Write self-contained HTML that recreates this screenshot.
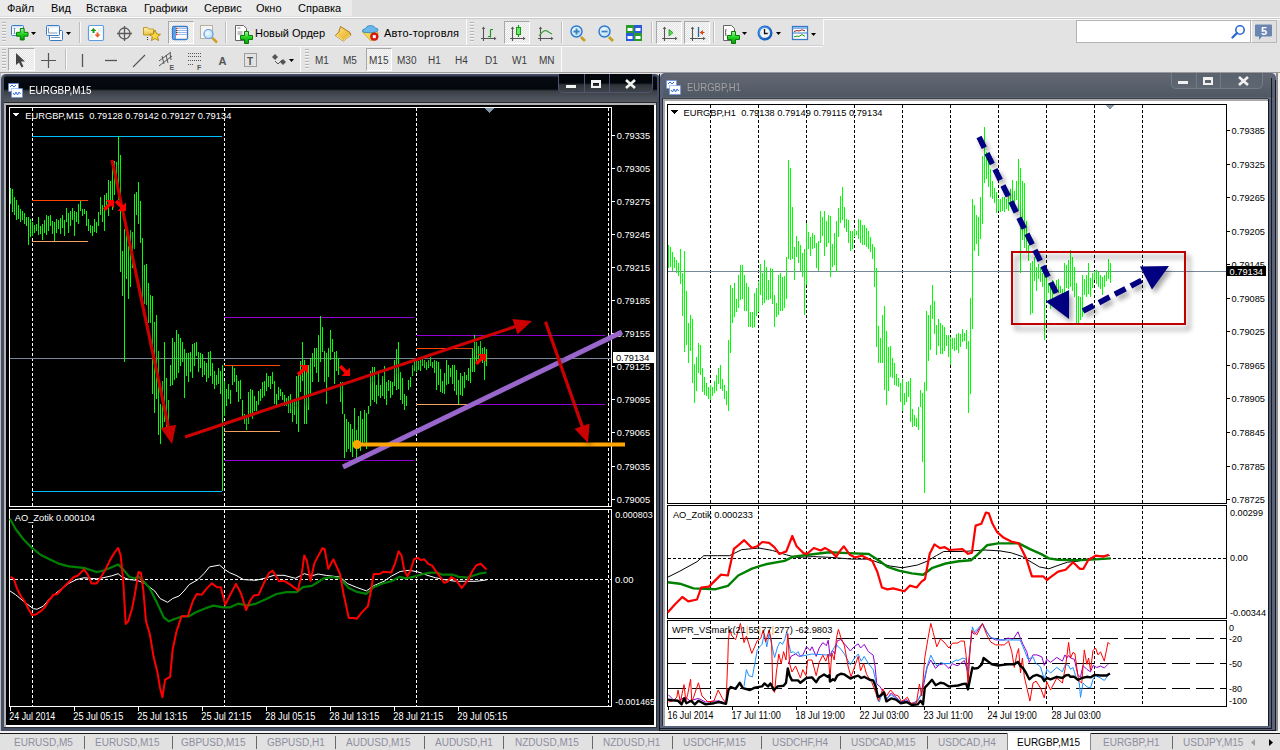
<!DOCTYPE html><html><head><meta charset="utf-8"><style>
*{margin:0;padding:0;box-sizing:border-box}
html,body{width:1280px;height:750px;overflow:hidden;background:#e2e2e2;font-family:"Liberation Sans",sans-serif;position:relative}
.a{position:absolute}
.mt{position:absolute;top:1px;font-size:11px;color:#000;line-height:14px;white-space:pre}
.tbt{position:absolute;font-size:11px;color:#000;line-height:14px;white-space:pre}
.tf{position:absolute;top:54px;font-size:10px;color:#3c3c3c;line-height:13px;white-space:pre}
.sep{position:absolute;width:2px;border-left:1px solid #bdbdbd;border-right:1px solid #fafafa}
.grip{position:absolute;width:4px;background:repeating-linear-gradient(#b5b5b5 0 1px,#f4f4f4 1px 2px,transparent 2px 3px)}
.pr{position:absolute;border-top:1px solid #a8a8a8;border-left:1px solid #a8a8a8;border-right:1px solid #fff;border-bottom:1px solid #fff;background:repeating-conic-gradient(#e4e4e4 0 25%,#f8f8f8 0 50%) 0 0/2px 2px}
.tab{position:absolute;top:2px;font-size:10px;color:#8e8ea0;line-height:13px;white-space:pre}
.ts{position:absolute;top:736px;width:1px;height:13px;background:#6a6a6a}
svg text{font-family:"Liberation Sans",sans-serif}
</style></head><body><div class="a" style="left:0;top:0;width:1280px;height:17px;background:#dfdfdf"></div><div class="a" style="left:0;top:0;width:352px;height:16px;background:#ebebeb"></div><span class="mt" style="left:7px">Файл</span><span class="mt" style="left:51px">Вид</span><span class="mt" style="left:86px">Вставка</span><span class="mt" style="left:144px">Графики</span><span class="mt" style="left:204px">Сервис</span><span class="mt" style="left:256px">Окно</span><span class="mt" style="left:298px">Справка</span><div class="a" style="left:0;top:17px;width:1280px;height:1px;background:#fdfdfd"></div><div class="a" style="left:0;top:18px;width:1280px;height:1px;background:#c9c9c9"></div><div class="a" style="left:0;top:19px;width:1280px;height:26px;background:#e3e3e3"></div><div class="a" style="left:0;top:19px;width:1280px;height:1px;background:#fafafa"></div><div class="a" style="left:0;top:45px;width:823px;height:1px;background:#cfcfcf"></div><div class="a" style="left:0;top:46px;width:823px;height:1px;background:#fbfbfb"></div><div class="a" style="left:0;top:47px;width:1280px;height:25px;background:#e3e3e3"></div><div class="a" style="left:0;top:72px;width:1280px;height:1px;background:#9a9a9a"></div><div class="a" style="left:0px;top:19px;width:467px;height:26px;border-right:1px solid #fbfbfb;background:#e3e3e3"></div><div class="a" style="left:467px;top:19px;width:357px;height:26px;border-right:1px solid #fbfbfb;background:#e3e3e3"></div><div class="a" style="left:0px;top:47px;width:301px;height:25px;border-right:1px solid #fbfbfb;background:#e3e3e3"></div><div class="a" style="left:301px;top:47px;width:261px;height:25px;border-right:1px solid #fbfbfb;background:#e3e3e3"></div><div class="grip" style="left:2px;top:22px;height:20px"></div><div class="grip" style="left:470px;top:22px;height:20px"></div><div class="grip" style="left:2px;top:49px;height:20px"></div><div class="grip" style="left:305px;top:49px;height:20px"></div><div class="sep" style="left:79px;top:22px;height:21px"></div><div class="sep" style="left:225px;top:22px;height:21px"></div><div class="sep" style="left:561px;top:22px;height:21px"></div><div class="sep" style="left:651px;top:22px;height:21px"></div><div class="sep" style="left:713px;top:22px;height:21px"></div><div class="sep" style="left:65px;top:49px;height:21px"></div><div class="pr" style="left:168px;top:21px;width:26px;height:23px"></div><div class="pr" style="left:504px;top:21px;width:26px;height:23px"></div><div class="pr" style="left:656px;top:21px;width:26px;height:23px"></div><div class="pr" style="left:684px;top:21px;width:26px;height:23px"></div><div class="pr" style="left:8px;top:48px;width:27px;height:23px"></div><div class="pr" style="left:366px;top:48px;width:26px;height:23px"></div><span class="tbt" style="left:255px;top:26px">Новый Ордер</span><span class="tbt" style="left:384px;top:26px;letter-spacing:0.2px">Авто-торговля</span><span class="tf" style="left:315px">M1</span><span class="tf" style="left:343px">M5</span><span class="tf" style="left:369px">M15</span><span class="tf" style="left:397px">M30</span><span class="tf" style="left:428px">H1</span><span class="tf" style="left:455px">H4</span><span class="tf" style="left:485px">D1</span><span class="tf" style="left:512px">W1</span><span class="tf" style="left:539px">MN</span><div class="a" style="left:1076px;top:20px;width:175px;height:23px;background:#fff;border:1px solid #b4b4b4"></div><div class="a" style="left:1251px;top:20px;width:26px;height:23px;background:#e0e0e0;border:1px solid #b8b8b8;border-left:1px solid #fff"></div><svg class="a" style="left:1230px;top:24px" width="16" height="16" viewBox="0 0 16 16"><circle cx="10" cy="6" r="4.2" fill="none" stroke="#2a6ad0" stroke-width="1.6"/><path d="M7 9 L2.5 13.5" stroke="#2a6ad0" stroke-width="2.4" stroke-linecap="round"/></svg><svg class="a" style="left:1255px;top:24px" width="18" height="17" viewBox="0 0 18 17"><path d="M1 0.5 h15 a1 1 0 0 1 1 1 v10 a1 1 0 0 1 -1 1 h-9 l-3 3.5 v-3.5 h-3 a1 1 0 0 1 -1 -1 v-10 a1 1 0 0 1 1 -1z" fill="#6a86b0"/><text x="9" y="10.5" font-size="11" font-weight="bold" fill="#fff" text-anchor="middle" font-family="Liberation Sans">5</text></svg><svg class="a" style="left:0;top:0" width="830" height="73" viewBox="0 0 830 73"><defs><linearGradient id="gplus" x1="0" y1="0" x2="0" y2="1"><stop offset="0" stop-color="#9dff9d"/><stop offset="0.5" stop-color="#1fd21f"/><stop offset="1" stop-color="#0a9a0a"/></linearGradient><linearGradient id="gwin" x1="0" y1="0" x2="0" y2="1"><stop offset="0" stop-color="#bcd8f4"/><stop offset="0.3" stop-color="#fff"/><stop offset="1" stop-color="#fff"/></linearGradient><linearGradient id="gfold" x1="0" y1="0" x2="0" y2="1"><stop offset="0" stop-color="#fff6b0"/><stop offset="1" stop-color="#e8c040"/></linearGradient><radialGradient id="glens" cx="0.4" cy="0.4" r="0.6"><stop offset="0" stop-color="#f4fbff"/><stop offset="1" stop-color="#b9dcf4"/></radialGradient><linearGradient id="gbook" x1="0" y1="0" x2="1" y2="1"><stop offset="0" stop-color="#ffe680"/><stop offset="1" stop-color="#e0a820"/></linearGradient><linearGradient id="gclock" x1="0" y1="0" x2="1" y2="1"><stop offset="0" stop-color="#5aa8f8"/><stop offset="1" stop-color="#0848a8"/></linearGradient></defs><rect x="11.5" y="25.5" width="12" height="10" rx="1" fill="url(#gwin)" stroke="#3a7bc8"/><path d="M14.5 28 v6 M13.5 29 l1 -1 l1 1 M13.5 33 l1 1 l1 -1" stroke="#7a9ab8" fill="none"/><path d="M20.333333333333332 28.5 h3.8333333333333335 v3.8333333333333335 h3.8333333333333335 v3.8333333333333335 h-3.8333333333333335 v3.8333333333333335 h-3.8333333333333335 v-3.8333333333333335 h-3.8333333333333335 v-3.8333333333333335 h3.8333333333333335 z" fill="url(#gplus)" stroke="#0a7a0a" stroke-width="1"/><polygon points="31,32 36,32 33.5,35" fill="#000"/><rect x="49.5" y="30.5" width="13" height="10" rx="1" fill="#fff" stroke="#3a7bc8"/><rect x="46.5" y="25.5" width="13" height="10" rx="1" fill="url(#gwin)" stroke="#3a7bc8"/><path d="M48.5 28 v5 h9 M51 37.5 h9" stroke="#7a9ab8" fill="none"/><polygon points="66,32 71,32 68.5,35" fill="#000"/><rect x="88.5" y="25.5" width="15" height="15" rx="1.5" fill="#fff" stroke="#5a9ee8" stroke-width="1.2"/><path d="M93.5 28 l-3 3 h2 v2 h2 v-2 h2 z" fill="#1a9a1a"/><path d="M97.5 37.5 l3 -3 h-2 v-2 h-2 v2 h-2 z" fill="#e85a2a"/><path d="M98 29 h4 M98 31 h4 M90 35 h3 M90 37 h3" stroke="#ddd" stroke-width="0.8"/><circle cx="124.5" cy="33.5" r="5.5" fill="none" stroke="#5a5a5a" stroke-width="1.3"/><path d="M124.5 26 v15 M117 33.5 h15" stroke="#5a5a5a" stroke-width="1.3"/><path d="M143.5 27.5 h4 l1 1.5 h5 v6 h-10 z" fill="url(#gfold)" stroke="#c09a20"/><polygon points="155,30 156.7,34 160.5,34.3 157.6,36.8 158.6,40.6 155,38.5 151.4,40.6 152.4,36.8 149.5,34.3 153.3,34" fill="#f8d840" stroke="#b08010" stroke-width="0.9"/><path d="M147.5 37 v4" stroke="#333" stroke-dasharray="1,1"/><rect x="172.5" y="26.5" width="15" height="13" rx="1.5" fill="#fff" stroke="#3a7bc8" stroke-width="1.3"/><rect x="173" y="27" width="3" height="12" fill="#5a9ee8"/><path d="M178 28.5 h9 M178 30.5 h9 M178 32.5 h9 M178 34.5 h9" stroke="#8fb2e6" stroke-width="0.9"/><circle cx="176.8" cy="28.5" r="0.8" fill="#e00"/><circle cx="176.8" cy="30.5" r="0.8" fill="#222"/><circle cx="176.8" cy="32.5" r="0.8" fill="#222"/><circle cx="176.8" cy="34.5" r="0.8" fill="#e00"/><rect x="200.5" y="25.5" width="12" height="13" fill="#f4f4f4" stroke="#b8b0a0"/><path d="M212.5 38 l4.5 4.5" stroke="#d0a020" stroke-width="2.5"/><circle cx="208.5" cy="34" r="4.5" fill="url(#glens)" stroke="#5a9ee8" stroke-width="1.2"/><path d="M235.5 25.5 h8 l3 3 v12 h-11 z" fill="#fff" stroke="#666"/><path d="M237.5 28 h3 M237.5 32 h5 M237.5 34 h5" stroke="#888"/><path d="M244.5 31.5 h4.0 v4.0 h4.0 v4.0 h-4.0 v4.0 h-4.0 v-4.0 h-4.0 v-4.0 h4.0 z" fill="url(#gplus)" stroke="#0a7a0a" stroke-width="1"/><path d="M340.5 26.5 l9.5 6 l0.8 2.5 l-7.5 6 l-8 -5.5 l3.5 -3.5 z" fill="url(#gbook)" stroke="#a06a10" stroke-width="0.9"/><path d="M336 35.5 l7.5 5 l6.5 -5.5" fill="none" stroke="#fff0a0" stroke-width="0.9"/><path d="M362.5 32 l8.5 9 l6.5 -3 l0.5 -6 z" fill="#f4dc50" stroke="#d0a020" stroke-width="0.8"/><path d="M362.5 31.5 q-1 -2 3 -3 q1 -3 5 -3 q4 0 4.5 2.5 q3.5 0 3 2.5 q-1 2 -7.5 2.3 q-7 0 -8 -1.3z" fill="#6ab8ea" stroke="#2a88c0" stroke-width="0.8"/><circle cx="374.3" cy="36.6" r="3.9" fill="#e01a10" stroke="#b01010" stroke-width="0.6"/><rect x="372.8" y="35.1" width="3" height="3" fill="#fff"/><path d="M483.5 28 v13 M481 38.5 h14" stroke="#555" stroke-width="1.1" fill="none"/><polygon points="483.5,26.5 481.8,29 485.2,29" fill="#555"/><polygon points="496.5,38.5 494,36.8 494,40.2" fill="#555"/><path d="M490.5 29.5 v8 M490.5 29.5 h2.5 M488 36.5 h2.5" stroke="#1a9a1a" stroke-width="1.2" fill="none"/><path d="M512.5 28 v13 M510 38.5 h14" stroke="#555" stroke-width="1.1" fill="none"/><polygon points="512.5,26.5 510.8,29 514.2,29" fill="#555"/><polygon points="525.5,38.5 523,36.8 523,40.2" fill="#555"/><path d="M518.5 25 v12" stroke="#1a9a1a" stroke-width="1.2"/><rect x="516.5" y="27.5" width="4" height="7" fill="#6ae86a" stroke="#1a9a1a"/><path d="M540.5 28 v13 M538 38.5 h14" stroke="#555" stroke-width="1.1" fill="none"/><polygon points="540.5,26.5 538.8,29 542.2,29" fill="#555"/><polygon points="553.5,38.5 551,36.8 551,40.2" fill="#555"/><path d="M539 36 q5 -7 8 -5 t5 3" stroke="#3aa03a" stroke-width="1.2" fill="none"/><path d="M581 37 l4 4" stroke="#c8a020" stroke-width="2.8"/><circle cx="576.5" cy="31.5" r="5.5" fill="url(#glens)" stroke="#2a78d0" stroke-width="1.4"/><path d="M573.5 31.5 h6 M576.5 28.5 v6" stroke="#3a80b8" stroke-width="1.8"/><path d="M609 37 l4 4" stroke="#c8a020" stroke-width="2.8"/><circle cx="604.5" cy="31.5" r="5.5" fill="url(#glens)" stroke="#2a78d0" stroke-width="1.4"/><path d="M601.5 31.5 h6" stroke="#3a80b8" stroke-width="1.8"/><rect x="626" y="25" width="8" height="8" fill="#2a9a2a"/><rect x="627.5" y="28" width="5" height="3" fill="#fff"/><rect x="634" y="25" width="8" height="8" fill="#2a5ad8"/><rect x="635.5" y="28" width="5" height="3" fill="#fff"/><rect x="626" y="33" width="8" height="8" fill="#2a5ad8"/><rect x="627.5" y="36" width="5" height="3" fill="#fff"/><rect x="634" y="33" width="8" height="8" fill="#2a9a2a"/><rect x="635.5" y="36" width="5" height="3" fill="#fff"/><path d="M664.5 28 v13 M662 38.5 h14" stroke="#555" stroke-width="1.1" fill="none"/><polygon points="664.5,26.5 662.8,29 666.2,29" fill="#555"/><polygon points="677.5,38.5 675,36.8 675,40.2" fill="#555"/><polygon points="669,29.5 669,36 673,32.7" fill="#5ad85a" stroke="#1a9a1a" stroke-width="0.8"/><path d="M692.5 28 v13 M690 38.5 h14" stroke="#555" stroke-width="1.1" fill="none"/><polygon points="692.5,26.5 690.8,29 694.2,29" fill="#555"/><polygon points="705.5,38.5 703,36.8 703,40.2" fill="#555"/><path d="M698.5 27 v10" stroke="#1a6aa0" stroke-width="1.3"/><polygon points="699.5,32.5 703,30 703,35" fill="#d84a10"/><path d="M702 32.5 h2.5" stroke="#d84a10"/><path d="M723.5 25.5 h8 l3 3 v12 h-11 z" fill="#fff" stroke="#666"/><path d="M726 29 q-1 3 0 7" stroke="#555" fill="none"/><path d="M731.5 31.5 h4.0 v4.0 h4.0 v4.0 h-4.0 v4.0 h-4.0 v-4.0 h-4.0 v-4.0 h4.0 z" fill="url(#gplus)" stroke="#0a7a0a" stroke-width="1"/><polygon points="742,32 747,32 744.5,35" fill="#000"/><circle cx="765" cy="33" r="7.5" fill="#1060c8"/><circle cx="765" cy="33" r="6.8" fill="url(#gclock)"/><circle cx="765" cy="33" r="5" fill="#f4f6f8"/><path d="M764.5 29 v4.5 h3.2" stroke="#111" stroke-width="1.3" fill="none"/><path d="M765 28.6 v0.8 M765 36.6 v0.8 M761 33 h0.8 M768.4 33 h0.8" stroke="#999" stroke-width="0.7"/><polygon points="776,32 781,32 778.5,35" fill="#000"/><rect x="792.5" y="26.5" width="15" height="13" fill="#fff" stroke="#3a7bc8" stroke-width="1.3"/><rect x="793" y="27" width="14" height="2" fill="#8ab8ec"/><path d="M793 33 h14" stroke="#3a7bc8"/><path d="M794 31.5 l3 -1 l2 0.5 l3 -1.2 l3 1" stroke="#a02010" fill="none"/><path d="M794 37 l3 -1 l2 0.5 l3 -2 l3 2" stroke="#1a9a1a" fill="none"/><polygon points="811,33 816,33 813.5,36" fill="#000"/><polygon points="16,53 16,65 19,62.5 21.5,67.5 23.5,66.5 21,61.5 25,61.5" fill="#444"/><path d="M48.5 53 v15 M41 60.5 h15" stroke="#555" stroke-width="1.2"/><path d="M82.5 54 v13" stroke="#555" stroke-width="1.3"/><path d="M105 60.5 h12" stroke="#555" stroke-width="1.3"/><path d="M133 67 l12 -12" stroke="#555" stroke-width="1.1"/><path d="M159 61 l12 -9 M159 66 l13 -10 M162 56 l2 8 M166 55 l2 8 M170 53 l1 7" stroke="#555" stroke-width="1" fill="none"/><text x="169.5" y="69.5" font-size="7" font-weight="bold" fill="#555">E</text><path d="M188 53.5 h13 M188 56.5 h13 M188 60.5 h13 M188 64.5 h6" stroke="#555" stroke-dasharray="1,1" fill="none"/><text x="197" y="69.5" font-size="7" font-weight="bold" fill="#555">F</text><text x="218.5" y="65" font-size="11" font-weight="bold" fill="#555">A</text><rect x="244.5" y="53.5" width="12" height="13" fill="none" stroke="#555" stroke-dasharray="1,1"/><text x="247" y="64.5" font-size="10" font-weight="bold" fill="#555">T</text><polygon points="275,54 278,57 275,60 272,57" fill="#555"/><polygon points="283,59 286,62 283,65 280,62" fill="#555"/><path d="M275 61 l3 3 l4 -4" stroke="#555" stroke-width="1" fill="none"/><polygon points="289,59 294,59 291.5,62" fill="#000"/></svg><div class="a" style="left:0;top:73px;width:1px;height:658px;background:#bdbdbd"></div><div class="a" style="left:1px;top:74px;width:659px;height:657px;background:#464f64;border-radius:5px 5px 0 0"></div><div class="a" style="left:4px;top:75px;width:653px;height:28px;border-radius:4px 4px 0 0;background:linear-gradient(#39415a 0px,#39415a 1px,#080b12 2px,#03060b 14px,#3a3e45 16px,#4a4e56 22px,#555960 27px,#8a8c90 28px)"></div><div class="a" style="left:660px;top:73px;width:616px;height:658px;background:#58627a;border-radius:5px 5px 0 0"></div><div class="a" style="left:663px;top:74px;width:610px;height:25px;border-radius:4px 4px 0 0;background:linear-gradient(#616872 0px,#5c636e 8px,#525a66 20px,#4f5763 23px,#6a717c 24px)"></div><div class="a" style="left:659px;top:74px;width:1px;height:657px;background:#111"></div><div class="a" style="left:1276px;top:73px;width:2px;height:658px;background:#8a8a8a"></div><div class="a" style="left:1278px;top:73px;width:2px;height:658px;background:#f2f2f2"></div><div class="a" style="left:1275px;top:80px;width:1px;height:651px;background:#15181e"></div><div class="a" style="left:1271px;top:78px;width:1px;height:651px;background:#15181e"></div><div class="a" style="left:1268px;top:99px;width:1px;height:627px;background:#15181e"></div><div class="a" style="left:662px;top:725px;width:607px;height:1px;background:#15181e"></div><div class="a" style="left:660px;top:728px;width:612px;height:1px;background:#15181e"></div><div class="a" style="left:660px;top:730px;width:616px;height:1px;background:#15181e"></div><div class="a" style="left:0;top:731px;width:1280px;height:2px;background:#f4f4f4"></div><div class="a" style="left:4px;top:102px;width:653px;height:1px;background:#25282e"></div><div class="a" style="left:4px;top:103px;width:653px;height:624px;background:#fff;border-top:2px solid #b4b4b4;border-left:2px solid #b4b4b4"></div><div class="a" style="left:656px;top:102px;width:1px;height:626px;background:#2a2e36"></div><div class="a" style="left:4px;top:727px;width:653px;height:1px;background:#2a2e36"></div><svg class="a" style="left:6px;top:105px" width="648" height="620" viewBox="6 105 648 620" shape-rendering="crispEdges"><defs><filter id="blur" x="-20%" y="-20%" width="140%" height="140%"><feGaussianBlur stdDeviation="2.5"/></filter></defs><rect x="6" y="105" width="648" height="620" fill="#000"/><line x1="32.5" y1="108" x2="32.5" y2="506" stroke="#fff" stroke-width="1" stroke-dasharray="3,2"/><line x1="32.5" y1="510" x2="32.5" y2="706" stroke="#fff" stroke-width="1" stroke-dasharray="3,2"/><line x1="224.5" y1="108" x2="224.5" y2="506" stroke="#fff" stroke-width="1" stroke-dasharray="3,2"/><line x1="224.5" y1="510" x2="224.5" y2="706" stroke="#fff" stroke-width="1" stroke-dasharray="3,2"/><line x1="416.5" y1="108" x2="416.5" y2="506" stroke="#fff" stroke-width="1" stroke-dasharray="3,2"/><line x1="416.5" y1="510" x2="416.5" y2="706" stroke="#fff" stroke-width="1" stroke-dasharray="3,2"/><line x1="608.5" y1="108" x2="608.5" y2="506" stroke="#fff" stroke-width="1" stroke-dasharray="3,2"/><line x1="608.5" y1="510" x2="608.5" y2="706" stroke="#fff" stroke-width="1" stroke-dasharray="3,2"/><line x1="10" y1="579.5" x2="611" y2="579.5" stroke="#fff" stroke-width="1" stroke-dasharray="3,2"/><line x1="10" y1="358.5" x2="611" y2="358.5" stroke="#778899" stroke-width="1"/><rect x="32" y="136" width="190" height="1" fill="#00bfff"/><rect x="32" y="491" width="190" height="1" fill="#00bfff"/><rect x="32" y="200" width="56" height="1" fill="#ff4500"/><rect x="32" y="241" width="56" height="1" fill="#f4a460"/><rect x="224" y="317" width="190" height="1" fill="#9400d3"/><rect x="224" y="460" width="190" height="1" fill="#9400d3"/><rect x="416" y="335" width="189" height="1" fill="#9400d3"/><rect x="416" y="404" width="189" height="1" fill="#9400d3"/><rect x="224" y="365" width="56" height="1" fill="#ff4500"/><rect x="224" y="431" width="56" height="1" fill="#f4a460"/><rect x="416" y="348" width="56" height="1" fill="#ff4500"/><rect x="416" y="404" width="52" height="1" fill="#f4a460"/><path d="M10 188h1v16h-1zM12 189h1v23h-1zM14 197h1v18h-1zM16 200h1v20h-1zM18 205h1v14h-1zM20 209h1v13h-1zM22 211h1v9h-1zM24 213h1v11h-1zM26 217h1v9h-1zM28 217h1v28h-1zM30 219h1v18h-1zM32 222h1v14h-1zM34 225h1v8h-1zM36 224h1v7h-1zM38 217h1v18h-1zM40 226h1v8h-1zM42 224h1v16h-1zM44 220h1v13h-1zM46 215h1v20h-1zM48 216h1v15h-1zM50 215h1v11h-1zM52 221h1v13h-1zM54 222h1v19h-1zM56 219h1v14h-1zM58 220h1v9h-1zM60 218h1v16h-1zM62 215h1v13h-1zM64 220h1v16h-1zM66 208h1v14h-1zM68 213h1v20h-1zM70 211h1v15h-1zM72 208h1v12h-1zM74 211h1v25h-1zM76 212h1v10h-1zM78 204h1v20h-1zM80 201h1v10h-1zM82 209h1v7h-1zM84 209h1v5h-1zM86 211h1v15h-1zM88 219h1v12h-1zM90 225h1v8h-1zM92 226h1v10h-1zM94 219h1v13h-1zM96 222h1v11h-1zM98 212h1v14h-1zM100 197h1v18h-1zM102 205h1v17h-1zM104 195h1v36h-1zM106 193h1v17h-1zM108 180h1v36h-1zM110 181h1v24h-1zM112 164h1v46h-1zM114 161h1v34h-1zM116 162h1v24h-1zM118 136h1v64h-1zM120 155h1v117h-1zM122 251h1v45h-1zM124 229h1v133h-1zM126 231h1v48h-1zM128 246h1v53h-1zM130 230h1v57h-1zM132 232h1v36h-1zM134 194h1v55h-1zM136 192h1v23h-1zM138 182h1v42h-1zM140 201h1v42h-1zM142 238h1v64h-1zM144 265h1v39h-1zM146 264h1v41h-1zM148 283h1v40h-1zM150 295h1v28h-1zM152 296h1v98h-1zM154 322h1v91h-1zM156 315h1v84h-1zM158 351h1v84h-1zM160 404h1v40h-1zM162 381h1v47h-1zM164 342h1v80h-1zM166 378h1v54h-1zM168 400h1v23h-1zM170 365h1v21h-1zM172 338h1v47h-1zM174 342h1v38h-1zM176 330h1v48h-1zM178 334h1v39h-1zM180 338h1v28h-1zM182 342h1v20h-1zM184 349h1v49h-1zM186 353h1v23h-1zM188 353h1v29h-1zM190 352h1v20h-1zM192 344h1v34h-1zM194 343h1v23h-1zM196 342h1v14h-1zM198 352h1v20h-1zM200 353h1v15h-1zM202 354h1v23h-1zM204 361h1v14h-1zM206 363h1v19h-1zM208 352h1v26h-1zM210 351h1v25h-1zM212 363h1v21h-1zM214 371h1v18h-1zM216 375h1v10h-1zM218 368h1v16h-1zM220 371h1v23h-1zM222 365h1v126h-1zM224 381h1v35h-1zM226 389h1v17h-1zM228 384h1v15h-1zM230 390h1v14h-1zM232 366h1v19h-1zM234 368h1v14h-1zM236 375h1v17h-1zM238 381h1v21h-1zM240 380h1v19h-1zM242 400h1v16h-1zM244 414h1v10h-1zM246 416h1v14h-1zM248 392h1v32h-1zM250 389h1v26h-1zM252 390h1v29h-1zM254 396h1v15h-1zM256 401h1v10h-1zM258 391h1v14h-1zM260 389h1v12h-1zM262 382h1v16h-1zM264 381h1v15h-1zM266 373h1v18h-1zM268 376h1v11h-1zM270 376h1v13h-1zM272 372h1v12h-1zM274 381h1v23h-1zM276 394h1v11h-1zM278 387h1v13h-1zM280 389h1v7h-1zM282 392h1v8h-1zM284 395h1v11h-1zM286 398h1v8h-1zM288 396h1v17h-1zM290 394h1v19h-1zM292 401h1v21h-1zM294 399h1v16h-1zM296 376h1v48h-1zM298 372h1v60h-1zM300 361h1v31h-1zM302 342h1v39h-1zM304 360h1v64h-1zM306 371h1v53h-1zM308 365h1v45h-1zM310 358h1v38h-1zM312 353h1v29h-1zM314 348h1v19h-1zM316 348h1v25h-1zM318 335h1v47h-1zM320 316h1v46h-1zM322 327h1v25h-1zM324 351h1v31h-1zM326 353h1v51h-1zM328 348h1v29h-1zM330 330h1v30h-1zM332 339h1v13h-1zM334 352h1v32h-1zM336 351h1v20h-1zM338 358h1v17h-1zM340 382h1v20h-1zM342 382h1v32h-1zM344 414h1v44h-1zM346 419h1v33h-1zM348 422h1v27h-1zM350 424h1v28h-1zM352 429h1v28h-1zM354 408h1v34h-1zM356 430h1v28h-1zM358 416h1v26h-1zM360 411h1v40h-1zM362 419h1v25h-1zM364 410h1v32h-1zM366 413h1v36h-1zM368 406h1v8h-1zM370 371h1v35h-1zM372 367h1v33h-1zM374 367h1v35h-1zM376 385h1v19h-1zM378 371h1v25h-1zM380 385h1v13h-1zM382 376h1v20h-1zM384 366h1v33h-1zM386 382h1v23h-1zM388 380h1v11h-1zM390 381h1v17h-1zM392 382h1v13h-1zM394 360h1v26h-1zM396 349h1v41h-1zM398 342h1v47h-1zM400 372h1v28h-1zM402 378h1v26h-1zM404 394h1v16h-1zM406 396h1v10h-1zM408 380h1v10h-1zM410 377h1v10h-1zM412 365h1v11h-1zM414 361h1v10h-1zM416 358h1v14h-1zM418 361h1v9h-1zM420 360h1v11h-1zM422 358h1v8h-1zM424 360h1v8h-1zM426 362h1v8h-1zM428 360h1v8h-1zM430 357h1v9h-1zM432 362h1v6h-1zM434 360h1v13h-1zM436 361h1v29h-1zM438 362h1v23h-1zM440 369h1v23h-1zM442 381h1v12h-1zM444 373h1v21h-1zM446 360h1v25h-1zM448 365h1v19h-1zM450 368h1v9h-1zM452 365h1v19h-1zM454 365h1v26h-1zM456 370h1v25h-1zM458 380h1v24h-1zM460 373h1v22h-1zM462 376h1v20h-1zM464 372h1v16h-1zM466 375h1v5h-1zM468 368h1v13h-1zM470 358h1v25h-1zM472 348h1v24h-1zM474 335h1v37h-1zM476 342h1v22h-1zM478 346h1v13h-1zM480 341h1v19h-1zM482 348h1v15h-1zM484 347h1v33h-1zM486 349h1v17h-1z" fill="#00ff00"/><rect x="9.5" y="107.5" width="602" height="399" fill="none" stroke="#fff" stroke-width="1"/><rect x="9.5" y="509.5" width="602" height="197" fill="none" stroke="#fff" stroke-width="1"/><rect x="612" y="135" width="3" height="1" fill="#fff"/><text x="616.8" y="139.0" font-size="9.8" fill="#fff" textLength="33.3" lengthAdjust="spacingAndGlyphs" >0.79335</text><rect x="612" y="168" width="3" height="1" fill="#fff"/><text x="616.8" y="172.05" font-size="9.8" fill="#fff" textLength="33.3" lengthAdjust="spacingAndGlyphs" >0.79305</text><rect x="612" y="201" width="3" height="1" fill="#fff"/><text x="616.8" y="205.1" font-size="9.8" fill="#fff" textLength="33.3" lengthAdjust="spacingAndGlyphs" >0.79275</text><rect x="612" y="234" width="3" height="1" fill="#fff"/><text x="616.8" y="238.14999999999998" font-size="9.8" fill="#fff" textLength="33.3" lengthAdjust="spacingAndGlyphs" >0.79245</text><rect x="612" y="267" width="3" height="1" fill="#fff"/><text x="616.8" y="271.2" font-size="9.8" fill="#fff" textLength="33.3" lengthAdjust="spacingAndGlyphs" >0.79215</text><rect x="612" y="300" width="3" height="1" fill="#fff"/><text x="616.8" y="304.25" font-size="9.8" fill="#fff" textLength="33.3" lengthAdjust="spacingAndGlyphs" >0.79185</text><rect x="612" y="333" width="3" height="1" fill="#fff"/><text x="616.8" y="337.29999999999995" font-size="9.8" fill="#fff" textLength="33.3" lengthAdjust="spacingAndGlyphs" >0.79155</text><rect x="612" y="366" width="3" height="1" fill="#fff"/><text x="616.8" y="370.34999999999997" font-size="9.8" fill="#fff" textLength="33.3" lengthAdjust="spacingAndGlyphs" >0.79125</text><rect x="612" y="399" width="3" height="1" fill="#fff"/><text x="616.8" y="403.4" font-size="9.8" fill="#fff" textLength="33.3" lengthAdjust="spacingAndGlyphs" >0.79095</text><rect x="612" y="432" width="3" height="1" fill="#fff"/><text x="616.8" y="436.45" font-size="9.8" fill="#fff" textLength="33.3" lengthAdjust="spacingAndGlyphs" >0.79065</text><rect x="612" y="466" width="3" height="1" fill="#fff"/><text x="616.8" y="469.5" font-size="9.8" fill="#fff" textLength="33.3" lengthAdjust="spacingAndGlyphs" >0.79035</text><rect x="612" y="499" width="3" height="1" fill="#fff"/><text x="616.8" y="502.54999999999995" font-size="9.8" fill="#fff" textLength="33.3" lengthAdjust="spacingAndGlyphs" >0.79005</text><text x="615.3" y="518" font-size="9.8" fill="#fff" textLength="37.4" lengthAdjust="spacingAndGlyphs" >0.000803</text><text x="615" y="582.5" font-size="9.8" fill="#fff" textLength="18.4" lengthAdjust="spacingAndGlyphs" >0.00</text><text x="615.3" y="704.5" font-size="9.8" fill="#fff" textLength="39.5" lengthAdjust="spacingAndGlyphs" >-0.001465</text><rect x="10" y="707" width="1" height="4" fill="#fff"/><text x="9.3" y="719.8" font-size="10.2" fill="#fff" textLength="46" lengthAdjust="spacingAndGlyphs" >24 Jul 2014</text><rect x="74" y="707" width="1" height="4" fill="#fff"/><text x="73.3" y="719.8" font-size="10.2" fill="#fff" textLength="50" lengthAdjust="spacingAndGlyphs" >25 Jul 05:15</text><rect x="138" y="707" width="1" height="4" fill="#fff"/><text x="137.3" y="719.8" font-size="10.2" fill="#fff" textLength="50" lengthAdjust="spacingAndGlyphs" >25 Jul 13:15</text><rect x="202" y="707" width="1" height="4" fill="#fff"/><text x="201.3" y="719.8" font-size="10.2" fill="#fff" textLength="50" lengthAdjust="spacingAndGlyphs" >25 Jul 21:15</text><rect x="266" y="707" width="1" height="4" fill="#fff"/><text x="265.3" y="719.8" font-size="10.2" fill="#fff" textLength="50" lengthAdjust="spacingAndGlyphs" >28 Jul 05:15</text><rect x="330" y="707" width="1" height="4" fill="#fff"/><text x="329.3" y="719.8" font-size="10.2" fill="#fff" textLength="50" lengthAdjust="spacingAndGlyphs" >28 Jul 13:15</text><rect x="394" y="707" width="1" height="4" fill="#fff"/><text x="393.3" y="719.8" font-size="10.2" fill="#fff" textLength="50" lengthAdjust="spacingAndGlyphs" >28 Jul 21:15</text><rect x="458" y="707" width="1" height="4" fill="#fff"/><text x="457.3" y="719.8" font-size="10.2" fill="#fff" textLength="50" lengthAdjust="spacingAndGlyphs" >29 Jul 05:15</text><g shape-rendering="geometricPrecision"><polyline points="10.0,591.0 15.6,594.7 23.2,601.0 33.3,608.7 37.1,609.2 43.4,606.1 49.8,598.5 58.6,591.0 68.8,583.4 76.4,579.6 84.0,577.8 96.6,578.8 103.0,577.8 111.8,575.8 118.1,573.7 121.9,577.0 129.5,579.6 137.1,580.3 144.7,583.4 154.8,591.0 160.0,598.5 167.6,602.3 172.7,598.5 179.0,596.0 184.0,591.0 189.1,584.6 198.0,579.6 204.3,573.2 209.4,566.9 219.5,565.1 224.6,569.4 229.6,572.7 236.0,575.3 243.5,579.6 256.2,580.3 266.3,577.8 273.9,575.3 284.0,575.3 295.4,578.3 304.3,573.7 311.9,575.8 318.0,574.0 326.8,575.5 340.0,577.0 347.3,583.5 356.1,587.2 366.4,590.9 373.7,585.7 384.0,581.3 391.3,576.2 400.1,571.5 408.9,570.3 417.7,571.8 428.0,575.5 435.3,577.7 445.6,579.9 455.8,581.3 464.6,581.3 476.4,581.3 486.6,579.9" fill="none" stroke="#fff" stroke-width="1" stroke-linejoin="round" /><polyline points="10.0,518.8 15.6,529.0 23.2,539.0 32.0,547.9 40.9,555.0 51.0,560.0 58.6,563.6 68.8,566.4 78.9,567.4 85.2,568.2 96.6,572.0 101.7,571.2 109.3,568.2 118.1,564.4 123.2,569.4 129.5,577.0 134.6,578.3 138.4,576.5 142.2,579.6 149.8,588.4 157.4,603.6 163.8,617.5 168.9,621.3 175.2,618.8 182.8,616.3 189.1,616.3 195.4,612.5 204.3,608.7 213.2,605.6 223.3,607.4 229.6,607.4 238.5,603.6 247.3,605.6 256.2,603.6 266.3,599.0 276.5,594.0 286.6,592.2 296.7,592.2 303.0,587.2 311.9,585.9 318.0,582.0 323.9,578.4 332.7,577.0 340.0,578.4 348.8,587.9 356.1,591.6 366.4,593.8 373.7,587.2 382.5,583.5 391.3,581.3 399.4,576.9 406.0,578.4 413.3,576.9 420.6,574.7 428.0,572.8 436.8,572.5 442.6,574.7 452.9,574.7 458.8,576.9 467.6,577.7 473.4,575.5 480.8,573.3 486.6,572.5" fill="none" stroke="#008000" stroke-width="2.2" stroke-linejoin="round" /><polyline points="10.5,577.0 13.6,578.3 16.9,588.4 20.7,596.0 24.5,601.0 28.3,608.7 32.0,615.0 35.8,614.5 40.9,611.2 44.7,607.4 48.5,601.0 53.6,594.7 57.4,594.0 62.4,588.4 68.8,582.0 73.8,577.0 77.6,575.8 84.0,569.4 87.7,574.5 91.5,583.4 96.6,583.4 101.7,575.8 105.5,569.4 110.5,559.3 114.3,553.0 118.1,548.0 120.7,555.5 123.2,580.8 125.7,623.9 128.3,621.3 132.0,608.7 134.6,596.0 137.1,580.8 138.4,572.0 140.9,572.7 143.4,591.0 146.0,621.3 149.8,634.0 153.6,656.8 157.4,672.0 159.9,687.2 162.4,697.3 165.1,679.6 170.1,677.0 172.7,649.2 176.5,631.5 181.5,616.3 187.8,616.3 192.9,601.0 196.7,594.0 201.8,594.7 206.8,588.4 211.9,583.4 217.0,587.2 220.8,587.2 225.3,604.9 229.6,596.0 236.0,583.9 241.0,593.5 246.1,610.0 249.9,601.0 253.7,595.5 258.7,594.7 263.8,583.4 268.9,573.2 272.7,570.7 276.5,577.0 279.0,581.3 284.0,580.8 290.4,584.6 298.0,590.4 301.8,573.2 304.3,555.5 306.8,560.6 310.6,580.8 314.4,563.1 318.0,556.4 322.4,548.3 324.6,549.0 328.3,568.9 333.4,559.3 340.0,574.0 343.7,594.5 348.8,618.0 353.2,618.0 356.9,618.7 362.0,612.1 367.9,606.2 370.8,591.6 373.7,574.0 379.6,574.0 383.2,571.8 391.3,572.5 395.0,563.7 398.6,551.3 401.6,555.7 404.5,571.0 407.4,576.2 410.4,571.0 414.0,559.3 417.7,557.9 420.6,560.0 424.3,559.3 428.0,563.7 432.4,565.9 435.3,570.3 439.7,576.2 444.1,582.8 447.0,582.0 451.4,577.0 455.8,579.9 461.7,587.9 467.6,580.6 472.0,571.8 476.4,565.2 480.8,563.7 483.7,566.7 486.6,569.6" fill="none" stroke="#ff0000" stroke-width="2" stroke-linejoin="round" /><line x1="343" y1="467" x2="622" y2="332" stroke="#9966cc" stroke-width="5" stroke-linecap="butt" opacity="1"/><rect x="356" y="442.5" width="269" height="4" fill="#ffa500"/><circle cx="357" cy="444.5" r="4.5" fill="#ffa500"/><g opacity="0.35" filter="url(#blur)" transform="translate(3,4)"><line x1="112" y1="160" x2="168.3" y2="426.4" stroke="#000" stroke-width="3.2" /><polygon points="172.0,444.0 160.5,428.0 176.1,424.7" fill="#000"/></g><line x1="112" y1="160" x2="168.7" y2="428.3" stroke="#c80000" stroke-width="3.2" /><polygon points="172.0,444.0 160.5,428.0 176.1,424.7" fill="#c80000"/><g opacity="0.35" filter="url(#blur)" transform="translate(3,4)"><line x1="185" y1="437" x2="514.9" y2="326.7" stroke="#000" stroke-width="3.2" /><polygon points="532.0,321.0 517.5,334.3 512.4,319.1" fill="#000"/></g><line x1="185" y1="437" x2="516.8" y2="326.1" stroke="#cc0000" stroke-width="3.2" /><polygon points="532.0,321.0 517.5,334.3 512.4,319.1" fill="#cc0000"/><g opacity="0.35" filter="url(#blur)" transform="translate(3,4)"><line x1="545.5" y1="321.7" x2="582.0" y2="426.0" stroke="#000" stroke-width="3.2" /><polygon points="588.0,443.0 574.5,428.7 589.6,423.4" fill="#000"/></g><line x1="545.5" y1="321.7" x2="582.7" y2="427.9" stroke="#cc0000" stroke-width="3.2" /><polygon points="588.0,443.0 574.5,428.7 589.6,423.4" fill="#cc0000"/><polygon transform="translate(103,200)" points="2.5,0 11,0 11,8.5 8,5.5 2.4,11.2 -0.2,8.6 5.5,3" fill="#ff0000"/><polygon transform="translate(115,200)" points="2.5,11 11,11 11,2.5 8,5.5 2.4,-0.2 -0.2,2.4 5.5,8" fill="#ff0000"/><polygon transform="translate(297,365)" points="2.5,0 11,0 11,8.5 8,5.5 2.4,11.2 -0.2,8.6 5.5,3" fill="#ff0000"/><polygon transform="translate(339,365)" points="2.5,11 11,11 11,2.5 8,5.5 2.4,-0.2 -0.2,2.4 5.5,8" fill="#ff0000"/><polygon transform="translate(475,354)" points="2.5,0 11,0 11,8.5 8,5.5 2.4,11.2 -0.2,8.6 5.5,3" fill="#ff0000"/></g><rect x="613" y="352" width="41" height="11" fill="#fff"/><text x="616" y="361.3" font-size="9.8" fill="#000" textLength="33.3" lengthAdjust="spacingAndGlyphs" >0.79134</text><polygon points="13,113 19,113 16,117" fill="#fff"/><text x="25.3" y="119.2" font-size="9.8" fill="#fff" textLength="206" lengthAdjust="spacingAndGlyphs" >EURGBP,M15&#160;&#160;0.79128 0.79142 0.79127 0.79134</text><rect x="14" y="510" width="82" height="12" fill="#000"/><text x="14.7" y="521.2" font-size="9.8" fill="#fff" textLength="80.3" lengthAdjust="spacingAndGlyphs" >AO_Zotik 0.000104</text><polygon points="484.5,108 494.5,108 489.5,113" fill="#8094a8"/></svg><div class="a" style="left:662px;top:98px;width:1px;height:628px;background:#2a2e36"></div><div class="a" style="left:662px;top:98px;width:606px;height:1px;background:#3a404c"></div><div class="a" style="left:663px;top:99px;width:605px;height:627px;background:#fff;border-top:2px solid #a8a8a8;border-left:2px solid #a8a8a8"></div><svg class="a" style="left:665px;top:101px" width="601" height="623" viewBox="665 101 601 623" shape-rendering="crispEdges"><defs><filter id="blur2" x="-20%" y="-20%" width="140%" height="140%"><feGaussianBlur stdDeviation="2.5"/></filter></defs><rect x="665" y="101" width="601" height="623" fill="#fff"/><line x1="710.5" y1="105" x2="710.5" y2="503" stroke="#000" stroke-width="1" stroke-dasharray="3,2"/><line x1="710.5" y1="506" x2="710.5" y2="618" stroke="#000" stroke-width="1" stroke-dasharray="3,2"/><line x1="710.5" y1="621" x2="710.5" y2="706" stroke="#000" stroke-width="1" stroke-dasharray="3,2"/><line x1="758.5" y1="105" x2="758.5" y2="503" stroke="#000" stroke-width="1" stroke-dasharray="3,2"/><line x1="758.5" y1="506" x2="758.5" y2="618" stroke="#000" stroke-width="1" stroke-dasharray="3,2"/><line x1="758.5" y1="621" x2="758.5" y2="706" stroke="#000" stroke-width="1" stroke-dasharray="3,2"/><line x1="806.5" y1="105" x2="806.5" y2="503" stroke="#000" stroke-width="1" stroke-dasharray="3,2"/><line x1="806.5" y1="506" x2="806.5" y2="618" stroke="#000" stroke-width="1" stroke-dasharray="3,2"/><line x1="806.5" y1="621" x2="806.5" y2="706" stroke="#000" stroke-width="1" stroke-dasharray="3,2"/><line x1="854.5" y1="105" x2="854.5" y2="503" stroke="#000" stroke-width="1" stroke-dasharray="3,2"/><line x1="854.5" y1="506" x2="854.5" y2="618" stroke="#000" stroke-width="1" stroke-dasharray="3,2"/><line x1="854.5" y1="621" x2="854.5" y2="706" stroke="#000" stroke-width="1" stroke-dasharray="3,2"/><line x1="902.5" y1="105" x2="902.5" y2="503" stroke="#000" stroke-width="1" stroke-dasharray="3,2"/><line x1="902.5" y1="506" x2="902.5" y2="618" stroke="#000" stroke-width="1" stroke-dasharray="3,2"/><line x1="902.5" y1="621" x2="902.5" y2="706" stroke="#000" stroke-width="1" stroke-dasharray="3,2"/><line x1="950.5" y1="105" x2="950.5" y2="503" stroke="#000" stroke-width="1" stroke-dasharray="3,2"/><line x1="950.5" y1="506" x2="950.5" y2="618" stroke="#000" stroke-width="1" stroke-dasharray="3,2"/><line x1="950.5" y1="621" x2="950.5" y2="706" stroke="#000" stroke-width="1" stroke-dasharray="3,2"/><line x1="998.5" y1="105" x2="998.5" y2="503" stroke="#000" stroke-width="1" stroke-dasharray="3,2"/><line x1="998.5" y1="506" x2="998.5" y2="618" stroke="#000" stroke-width="1" stroke-dasharray="3,2"/><line x1="998.5" y1="621" x2="998.5" y2="706" stroke="#000" stroke-width="1" stroke-dasharray="3,2"/><line x1="1046.5" y1="105" x2="1046.5" y2="503" stroke="#000" stroke-width="1" stroke-dasharray="3,2"/><line x1="1046.5" y1="506" x2="1046.5" y2="618" stroke="#000" stroke-width="1" stroke-dasharray="3,2"/><line x1="1046.5" y1="621" x2="1046.5" y2="706" stroke="#000" stroke-width="1" stroke-dasharray="3,2"/><line x1="1094.5" y1="105" x2="1094.5" y2="503" stroke="#000" stroke-width="1" stroke-dasharray="3,2"/><line x1="1094.5" y1="506" x2="1094.5" y2="618" stroke="#000" stroke-width="1" stroke-dasharray="3,2"/><line x1="1094.5" y1="621" x2="1094.5" y2="706" stroke="#000" stroke-width="1" stroke-dasharray="3,2"/><line x1="1142.5" y1="105" x2="1142.5" y2="503" stroke="#000" stroke-width="1" stroke-dasharray="3,2"/><line x1="1142.5" y1="506" x2="1142.5" y2="618" stroke="#000" stroke-width="1" stroke-dasharray="3,2"/><line x1="1142.5" y1="621" x2="1142.5" y2="706" stroke="#000" stroke-width="1" stroke-dasharray="3,2"/><line x1="668" y1="558.5" x2="1226" y2="558.5" stroke="#000" stroke-width="1" stroke-dasharray="3,2"/><line x1="668" y1="638.5" x2="1226" y2="638.5" stroke="#000" stroke-width="1" stroke-dasharray="18,6"/><line x1="668" y1="663.5" x2="1226" y2="663.5" stroke="#000" stroke-width="1" stroke-dasharray="18,6"/><line x1="668" y1="688.5" x2="1226" y2="688.5" stroke="#000" stroke-width="1" stroke-dasharray="18,6"/><line x1="668" y1="271.5" x2="1226" y2="271.5" stroke="#778899" stroke-width="1"/><path d="M668 245h1v23h-1zM670 247h1v20h-1zM672 252h1v19h-1zM674 257h1v11h-1zM676 260h1v13h-1zM678 263h1v13h-1zM680 249h1v35h-1zM682 273h1v43h-1zM684 251h1v101h-1zM686 291h1v54h-1zM688 323h1v40h-1zM690 315h1v36h-1zM692 319h1v64h-1zM694 364h1v39h-1zM696 357h1v34h-1zM698 343h1v30h-1zM700 345h1v30h-1zM702 368h1v24h-1zM704 377h1v18h-1zM706 383h1v13h-1zM708 387h1v12h-1zM710 385h1v15h-1zM712 387h1v9h-1zM714 381h1v12h-1zM716 375h1v16h-1zM718 368h1v16h-1zM720 365h1v24h-1zM722 379h1v12h-1zM724 385h1v14h-1zM726 391h1v14h-1zM728 340h1v71h-1zM730 285h1v68h-1zM732 288h1v35h-1zM734 283h1v34h-1zM736 299h1v13h-1zM738 275h1v33h-1zM740 265h1v35h-1zM742 265h1v34h-1zM744 275h1v36h-1zM746 283h1v28h-1zM748 287h1v40h-1zM750 312h1v15h-1zM752 312h1v16h-1zM754 293h1v34h-1zM756 288h1v28h-1zM758 281h1v31h-1zM760 264h1v31h-1zM762 273h1v32h-1zM764 260h1v43h-1zM766 267h1v33h-1zM768 280h1v20h-1zM770 268h1v31h-1zM772 269h1v35h-1zM774 295h1v32h-1zM776 303h1v14h-1zM778 275h1v40h-1zM780 273h1v38h-1zM782 277h1v34h-1zM784 276h1v32h-1zM786 257h1v42h-1zM788 160h1v99h-1zM790 168h1v92h-1zM792 207h1v52h-1zM794 247h1v33h-1zM796 236h1v21h-1zM798 241h1v22h-1zM800 245h1v26h-1zM802 253h1v24h-1zM804 249h1v66h-1zM806 223h1v62h-1zM808 232h1v17h-1zM810 237h1v19h-1zM812 233h1v16h-1zM814 235h1v13h-1zM816 243h1v25h-1zM818 241h1v30h-1zM820 211h1v32h-1zM822 217h1v19h-1zM824 211h1v45h-1zM826 221h1v26h-1zM828 215h1v28h-1zM830 216h1v61h-1zM832 244h1v23h-1zM834 233h1v32h-1zM836 221h1v51h-1zM838 208h1v29h-1zM840 196h1v27h-1zM842 187h1v33h-1zM844 207h1v21h-1zM846 219h1v13h-1zM848 220h1v23h-1zM850 231h1v20h-1zM852 231h1v18h-1zM854 229h1v8h-1zM856 231h1v4h-1zM858 219h1v20h-1zM860 220h1v23h-1zM862 225h1v20h-1zM864 225h1v20h-1zM866 228h1v19h-1zM868 231h1v18h-1zM870 237h1v15h-1zM872 244h1v15h-1zM874 247h1v40h-1zM876 268h1v79h-1zM878 326h1v37h-1zM880 338h1v25h-1zM882 315h1v48h-1zM884 306h1v84h-1zM886 331h1v74h-1zM888 347h1v44h-1zM890 346h1v31h-1zM892 358h1v20h-1zM894 363h1v22h-1zM896 374h1v12h-1zM898 378h1v9h-1zM900 383h1v19h-1zM902 379h1v32h-1zM904 393h1v12h-1zM906 382h1v20h-1zM908 381h1v16h-1zM910 378h1v44h-1zM912 409h1v18h-1zM914 415h1v11h-1zM916 418h1v9h-1zM918 407h1v23h-1zM920 390h1v17h-1zM922 393h1v69h-1zM924 382h1v111h-1zM926 311h1v80h-1zM928 315h1v46h-1zM930 305h1v45h-1zM932 285h1v34h-1zM934 301h1v33h-1zM936 325h1v30h-1zM938 319h1v27h-1zM940 323h1v31h-1zM942 325h1v29h-1zM944 327h1v24h-1zM946 335h1v11h-1zM948 335h1v22h-1zM950 337h1v28h-1zM952 338h1v11h-1zM954 338h1v13h-1zM956 334h1v16h-1zM958 333h1v20h-1zM960 334h1v13h-1zM962 329h1v13h-1zM964 333h1v8h-1zM966 330h1v19h-1zM968 341h1v72h-1zM970 298h1v96h-1zM972 199h1v130h-1zM974 205h1v46h-1zM976 215h1v29h-1zM978 217h1v39h-1zM980 197h1v42h-1zM982 156h1v68h-1zM984 127h1v56h-1zM986 152h1v27h-1zM988 160h1v27h-1zM990 169h1v28h-1zM992 181h1v18h-1zM994 188h1v15h-1zM996 192h1v21h-1zM998 199h1v12h-1zM1000 199h1v13h-1zM1002 197h1v14h-1zM1004 197h1v15h-1zM1006 199h1v10h-1zM1008 195h1v16h-1zM1010 189h1v16h-1zM1012 180h1v23h-1zM1014 191h1v17h-1zM1016 181h1v19h-1zM1018 159h1v52h-1zM1020 168h1v105h-1zM1022 181h1v59h-1zM1024 183h1v65h-1zM1026 221h1v31h-1zM1028 245h1v16h-1zM1030 263h1v52h-1zM1032 261h1v52h-1zM1034 257h1v24h-1zM1036 267h1v24h-1zM1038 264h1v15h-1zM1040 268h1v14h-1zM1042 273h1v14h-1zM1044 271h1v69h-1zM1046 277h1v23h-1zM1048 283h1v10h-1zM1050 287h1v22h-1zM1052 280h1v21h-1zM1054 284h1v9h-1zM1056 280h1v13h-1zM1058 279h1v14h-1zM1060 286h1v7h-1zM1062 289h1v7h-1zM1064 263h1v30h-1zM1066 265h1v23h-1zM1068 260h1v29h-1zM1070 250h1v37h-1zM1072 257h1v34h-1zM1074 267h1v30h-1zM1076 283h1v40h-1zM1078 296h1v27h-1zM1080 297h1v23h-1zM1082 275h1v42h-1zM1084 279h1v16h-1zM1086 275h1v22h-1zM1088 263h1v31h-1zM1090 278h1v19h-1zM1092 273h1v15h-1zM1094 271h1v9h-1zM1096 270h1v14h-1zM1098 272h1v15h-1zM1100 275h1v14h-1zM1102 277h1v18h-1zM1104 275h1v12h-1zM1106 271h1v10h-1zM1108 259h1v20h-1zM1110 263h1v20h-1z" fill="#00ff00"/><rect x="667.5" y="104.5" width="559" height="399" fill="none" stroke="#000" stroke-width="1"/><rect x="667.5" y="505.5" width="559" height="113" fill="none" stroke="#000" stroke-width="1"/><rect x="667.5" y="620.5" width="559" height="86" fill="none" stroke="#000" stroke-width="1"/><rect x="1227" y="130" width="3" height="1" fill="#000"/><text x="1231.5" y="134.0" font-size="9.8" fill="#000" textLength="33.5" lengthAdjust="spacingAndGlyphs" >0.79385</text><rect x="1227" y="164" width="3" height="1" fill="#000"/><text x="1231.5" y="167.55" font-size="9.8" fill="#000" textLength="33.5" lengthAdjust="spacingAndGlyphs" >0.79325</text><rect x="1227" y="197" width="3" height="1" fill="#000"/><text x="1231.5" y="201.1" font-size="9.8" fill="#000" textLength="33.5" lengthAdjust="spacingAndGlyphs" >0.79265</text><rect x="1227" y="231" width="3" height="1" fill="#000"/><text x="1231.5" y="234.64999999999998" font-size="9.8" fill="#000" textLength="33.5" lengthAdjust="spacingAndGlyphs" >0.79205</text><rect x="1227" y="264" width="3" height="1" fill="#000"/><text x="1231.5" y="268.2" font-size="9.8" fill="#000" textLength="33.5" lengthAdjust="spacingAndGlyphs" >0.79145</text><rect x="1227" y="298" width="3" height="1" fill="#000"/><text x="1231.5" y="301.75" font-size="9.8" fill="#000" textLength="33.5" lengthAdjust="spacingAndGlyphs" >0.79085</text><rect x="1227" y="331" width="3" height="1" fill="#000"/><text x="1231.5" y="335.29999999999995" font-size="9.8" fill="#000" textLength="33.5" lengthAdjust="spacingAndGlyphs" >0.79025</text><rect x="1227" y="365" width="3" height="1" fill="#000"/><text x="1231.5" y="368.84999999999997" font-size="9.8" fill="#000" textLength="33.5" lengthAdjust="spacingAndGlyphs" >0.78965</text><rect x="1227" y="398" width="3" height="1" fill="#000"/><text x="1231.5" y="402.4" font-size="9.8" fill="#000" textLength="33.5" lengthAdjust="spacingAndGlyphs" >0.78905</text><rect x="1227" y="432" width="3" height="1" fill="#000"/><text x="1231.5" y="435.95" font-size="9.8" fill="#000" textLength="33.5" lengthAdjust="spacingAndGlyphs" >0.78845</text><rect x="1227" y="466" width="3" height="1" fill="#000"/><text x="1231.5" y="469.5" font-size="9.8" fill="#000" textLength="33.5" lengthAdjust="spacingAndGlyphs" >0.78785</text><rect x="1227" y="499" width="3" height="1" fill="#000"/><text x="1231.5" y="503.04999999999995" font-size="9.8" fill="#000" textLength="33.5" lengthAdjust="spacingAndGlyphs" >0.78725</text><text x="1230" y="516.3" font-size="9.8" fill="#000" textLength="33" lengthAdjust="spacingAndGlyphs" >0.00299</text><text x="1230" y="561" font-size="9.8" fill="#000" textLength="17.7" lengthAdjust="spacingAndGlyphs" >0.00</text><text x="1230" y="615.5" font-size="9.8" fill="#000" textLength="36" lengthAdjust="spacingAndGlyphs" >-0.00344</text><text x="1229" y="630.5" font-size="9" fill="#000" text-anchor="start" >0</text><text x="1229" y="641.5" font-size="9" fill="#000" text-anchor="start" >-20</text><text x="1229" y="666.5" font-size="9" fill="#000" text-anchor="start" >-50</text><text x="1229" y="692" font-size="9" fill="#000" text-anchor="start" >-80</text><text x="1229" y="703.5" font-size="9" fill="#000" text-anchor="start" >-100</text><rect x="668" y="706" width="1" height="4" fill="#000"/><text x="667.5" y="718.8" font-size="10.2" fill="#000" textLength="46" lengthAdjust="spacingAndGlyphs" >16 Jul 2014</text><rect x="732" y="706" width="1" height="4" fill="#000"/><text x="731.5" y="718.8" font-size="10.2" fill="#000" textLength="49.4" lengthAdjust="spacingAndGlyphs" >17 Jul 11:00</text><rect x="796" y="706" width="1" height="4" fill="#000"/><text x="795.5" y="718.8" font-size="10.2" fill="#000" textLength="49.4" lengthAdjust="spacingAndGlyphs" >18 Jul 19:00</text><rect x="860" y="706" width="1" height="4" fill="#000"/><text x="859.5" y="718.8" font-size="10.2" fill="#000" textLength="49.4" lengthAdjust="spacingAndGlyphs" >22 Jul 03:00</text><rect x="924" y="706" width="1" height="4" fill="#000"/><text x="923.5" y="718.8" font-size="10.2" fill="#000" textLength="49.4" lengthAdjust="spacingAndGlyphs" >23 Jul 11:00</text><rect x="988" y="706" width="1" height="4" fill="#000"/><text x="987.5" y="718.8" font-size="10.2" fill="#000" textLength="49.4" lengthAdjust="spacingAndGlyphs" >24 Jul 19:00</text><rect x="1052" y="706" width="1" height="4" fill="#000"/><text x="1051.5" y="718.8" font-size="10.2" fill="#000" textLength="49.4" lengthAdjust="spacingAndGlyphs" >28 Jul 03:00</text><g shape-rendering="geometricPrecision"><polyline points="667.7,577.2 679.8,571.2 697.0,561.7 703.8,555.7 717.6,555.7 729.6,555.7 741.6,549.7 758.8,548.0 772.6,550.5 786.3,554.8 796.6,557.4 813.8,556.6 831.0,557.4 851.6,559.1 868.8,559.1 880.0,563.1 889.4,565.9 902.5,567.8 917.5,565.0 926.9,561.3 936.3,555.6 943.8,551.5 962.5,551.5 985.0,550.0 1000.0,550.9 1011.3,552.8 1022.5,556.6 1030.0,561.3 1039.4,566.9 1048.8,568.8 1058.1,565.4 1067.5,562.2 1076.9,561.3 1086.3,559.4 1095.6,556.6 1109.7,555.6" fill="none" stroke="#000" stroke-width="1" stroke-linejoin="round" /><polyline points="667.7,582.3 679.8,583.7 693.5,588.4 715.8,589.2 727.9,585.8 738.2,575.5 752.0,568.6 765.7,564.3 784.6,560.9 793.2,556.6 808.7,554.8 829.3,552.3 848.2,553.1 868.8,554.0 880.0,561.3 887.5,566.9 898.8,570.6 911.9,573.4 923.1,574.8 932.5,567.8 945.6,563.5 958.8,561.3 970.9,560.3 977.5,554.7 986.9,545.3 998.1,543.4 1018.8,543.4 1030.0,549.1 1041.3,554.1 1048.8,558.4 1058.1,559.8 1076.9,560.3 1095.6,559.4 1110.6,558.4" fill="none" stroke="#008000" stroke-width="2.4" stroke-linejoin="round" /><polyline points="667.7,612.4 674.6,604.7 682.3,597.0 688.3,601.3 697.0,599.5 701.2,587.5 709.0,586.6 721.0,574.6 727.9,575.5 733.9,548.8 738.2,545.4 744.2,540.2 752.0,548.0 757.1,546.3 762.3,542.0 769.1,542.8 774.3,547.1 779.4,554.0 786.3,551.4 792.3,536.0 796.6,546.3 803.5,553.1 806.9,554.0 813.8,548.0 820.7,550.5 825.0,548.0 831.0,551.4 836.2,556.6 839.6,551.4 843.9,546.3 849.9,554.8 855.1,557.4 862.0,555.7 872.3,560.9 877.4,572.0 881.9,587.5 887.5,589.4 893.1,588.4 904.4,591.3 910.0,585.6 916.6,587.5 921.3,581.9 925.0,579.1 929.7,553.8 934.4,544.4 940.0,548.1 944.7,547.2 949.4,550.0 962.5,549.1 968.1,553.8 971.9,552.8 975.6,525.6 981.3,523.8 985.9,512.5 988.8,513.4 992.5,523.8 997.2,532.2 1003.8,537.8 1011.3,541.6 1018.8,543.4 1026.3,558.4 1031.9,576.3 1043.1,576.3 1046.9,580.0 1050.6,577.2 1058.1,571.6 1065.6,569.7 1073.1,562.2 1079.7,568.8 1083.4,568.8 1088.1,560.3 1095.6,555.6 1103.1,556.6 1108.8,554.7" fill="none" stroke="#ff0000" stroke-width="2.2" stroke-linejoin="round" /><polyline points="668.4,694.8 673.2,699.6 678.0,700.8 685.2,697.2 690.0,700.8 698.4,698.4 705.6,702.0 718.8,700.8 726.0,703.2" fill="none" stroke="#9400d3" stroke-width="1" stroke-linejoin="round" /><polyline points="788.4,663.6 790.9,656.4 795.6,654.0 799.2,656.4 802.8,655.2 806.5,646.8 810.1,650.4 812.0,646.8 816.2,656.4 819.2,648.0 822.8,642.6 826.4,645.6 828.2,640.2 830.0,656.4 832.4,650.4 834.8,654.0 837.2,640.8 840.8,639.6 844.4,643.8 850.4,651.0 854.0,646.8 858.2,643.8 860.6,648.0 864.2,644.4 868.4,651.6 873.2,655.2 875.0,666.0 876.8,684.0 879.8,686.4 882.8,691.2 886.4,699.6 891.2,693.0 896.0,697.2 900.8,702.0 906.8,699.6 911.6,703.8 917.6,700.8 921.2,694.8 923.6,685.2 927.2,667.2 930.8,660.0 935.6,668.4 939.2,664.8 944.0,663.6 948.9,668.4 952.5,663.6 956.1,665.4 958.0,665.5 964.3,660.5 967.4,670.5 969.3,655.5 971.8,631.8 974.3,634.3 976.8,631.8 982.4,623.6 986.8,631.8 990.5,637.4 995.5,639.9 1004.3,639.9 1008.0,638.0 1013.0,639.3 1018.0,631.8 1020.5,638.6 1023.0,644.3 1026.8,651.8 1029.3,662.4 1033.0,654.9 1036.8,654.9 1041.8,656.8 1044.3,665.5 1046.8,659.3 1050.5,662.4 1056.8,657.4 1062.4,661.1 1064.9,654.9 1066.8,658.0 1068.6,655.5 1070.5,658.0 1074.3,659.3 1078.0,675.5 1080.5,676.8 1083.0,665.5 1086.8,669.3 1090.5,671.8 1093.0,665.5 1096.8,667.4 1100.5,666.1 1104.3,668.0 1108.0,664.3" fill="none" stroke="#9400d3" stroke-width="1" stroke-linejoin="round" /><polyline points="744.0,686.4 746.4,669.6 748.8,675.6 752.4,676.8 754.8,663.6 757.2,650.4 759.6,646.8 762.0,644.4 764.4,633.6 766.8,646.8 769.2,633.6 771.6,644.4 774.6,657.6 777.6,646.8 780.0,642.0 782.4,644.4 784.8,639.6 786.6,632.4 788.4,642.0 790.9,652.8 793.2,651.6 795.6,654.0 798.0,651.6 800.4,656.4 812.0,654.0 830.0,655.2 836.0,644.4 840.8,649.2 844.4,654.0 850.4,664.8 854.0,658.8 858.2,654.0 861.2,661.2 864.2,656.4 868.4,663.6 873.2,669.6 875.6,680.4 877.4,699.6 879.2,702.0 882.8,692.4 886.4,698.4 891.2,694.8 896.0,698.4 902.0,702.0 906.8,700.8 911.6,703.8 917.6,700.8 920.6,694.8 923.6,681.6 927.2,666.0 930.8,655.2 933.2,660.0 936.8,666.0 940.4,662.4 944.0,663.6 950.0,663.6 956.1,660.0 958.0,660.5 963.0,658.0 966.1,659.3 968.0,678.0 969.9,650.5 972.4,626.8 974.3,631.8 976.8,629.9 982.4,623.6 986.8,631.8 990.5,637.4 1000.0,640.0 1010.0,640.0 1020.0,640.0 1023.0,646.8 1028.0,659.3 1033.0,656.8 1035.5,663.0 1040.5,666.8 1044.3,679.3 1046.8,669.3 1050.5,673.0 1056.8,667.4 1062.4,671.8 1065.5,664.3 1068.6,665.5 1070.5,669.3 1073.0,667.4 1075.5,675.5 1079.3,683.0 1080.5,697.4 1083.0,683.0 1086.8,686.8 1090.5,688.0 1093.0,679.3 1095.5,675.5 1100.5,678.0 1104.3,680.5 1109.9,673.0" fill="none" stroke="#1e90ff" stroke-width="1" stroke-linejoin="round" /><polyline points="668.4,702.0 673.2,700.8 676.8,697.2 678.0,690.0 680.4,702.0 684.0,684.6 685.8,700.8 687.6,694.8 690.6,679.2 691.8,702.0 693.6,697.2 698.4,682.8 702.0,696.0 708.0,702.0 714.0,700.8 718.2,690.0 722.4,698.4 726.0,703.2 727.8,660.0 728.4,640.2 729.6,630.0 732.0,636.0 735.6,639.6 740.4,623.4 744.0,642.6 746.4,636.0 751.8,653.4 757.2,640.8 760.8,638.4 763.2,630.0 765.6,642.0 769.2,630.0 771.6,642.0 772.8,690.0 774.6,692.4 776.4,672.0 778.8,654.0 781.2,663.6 783.6,651.6 786.0,660.0 787.8,633.6 789.6,663.6 792.0,672.0 795.6,666.0 798.0,672.0 800.4,678.0 802.8,669.6 805.9,675.6 807.7,660.0 812.0,660.0 816.2,675.6 819.2,662.4 822.8,655.2 825.8,661.2 828.2,654.0 830.0,678.0 831.8,652.8 834.2,660.0 836.6,637.2 838.4,629.4 840.8,637.2 844.4,645.6 848.0,666.0 851.0,676.8 854.0,668.4 858.2,656.4 860.6,670.8 863.6,663.6 866.6,674.4 872.0,682.8 875.6,692.4 878.6,700.8 882.8,688.8 886.4,696.0 890.6,690.0 894.8,694.8 898.4,696.0 901.4,701.4 904.4,699.6 907.4,697.2 910.4,703.2 916.4,703.2 919.4,684.0 921.8,696.0 924.8,657.6 927.8,639.6 930.8,623.4 933.2,632.4 936.8,646.8 940.4,639.0 944.0,642.0 948.9,648.0 952.5,643.2 958.0,643.0 960.5,641.1 964.3,641.1 966.1,655.5 968.0,684.3 969.9,651.8 971.8,630.5 976.8,634.9 982.4,623.6 986.8,634.9 990.5,641.8 995.5,644.9 1004.3,644.9 1008.6,641.1 1011.8,651.8 1014.3,667.4 1016.8,654.3 1018.6,648.6 1020.5,673.0 1022.4,658.0 1024.3,676.8 1029.9,701.1 1033.0,683.0 1036.1,681.1 1040.5,688.0 1044.3,698.0 1046.8,681.8 1050.5,689.9 1056.8,678.0 1062.4,683.0 1065.5,666.8 1068.6,642.4 1070.5,658.0 1073.0,652.4 1074.9,653.6 1078.6,680.5 1081.8,683.0 1084.3,649.9 1086.8,664.3 1088.6,658.0 1090.5,670.5 1093.0,650.5 1095.5,648.0 1098.0,654.9 1100.5,651.8 1104.3,661.1 1108.0,642.4 1109.9,644.3" fill="none" stroke="#ff0000" stroke-width="1" stroke-linejoin="round" /><polyline points="667.8,699.6 672.0,700.2 678.0,700.8 681.6,704.4 684.0,698.4 686.4,703.2 691.2,700.8 694.8,704.4 698.4,700.8 705.6,704.4 714.0,703.2 718.8,702.0 726.0,703.8 728.4,690.0 730.8,687.0 735.6,688.8 739.8,682.8 742.8,688.2 750.0,690.0 754.8,687.6 762.0,686.4 764.4,683.4 768.0,686.4 770.4,683.4 774.0,690.0 777.6,686.4 783.6,685.8 786.0,682.8 787.8,668.4 789.6,675.6 792.0,680.4 798.0,680.4 800.4,682.8 806.5,678.0 812.0,677.4 816.2,682.2 819.2,677.4 824.0,674.4 827.6,676.8 829.4,675.0 830.0,681.6 833.0,679.2 834.8,680.4 837.2,675.6 840.8,673.8 844.4,674.4 850.4,678.6 854.0,676.8 858.2,675.6 861.2,678.0 864.2,676.8 869.6,679.8 873.2,680.4 875.6,686.4 878.0,697.2 881.6,694.8 884.0,692.4 886.4,701.4 891.2,698.4 896.0,699.6 900.8,703.2 906.8,702.0 911.6,705.0 917.6,704.4 920.6,700.8 923.0,704.4 924.8,687.6 927.2,685.2 932.0,679.8 935.6,685.2 940.4,682.8 944.0,683.4 948.9,686.4 958.0,685.5 961.8,684.3 966.1,683.6 968.0,689.3 970.5,676.8 972.4,667.4 974.3,668.6 978.0,668.0 981.8,664.3 983.6,658.0 986.8,660.5 989.3,662.4 991.8,664.3 998.0,665.5 1003.0,664.9 1008.0,664.3 1014.3,664.3 1018.0,661.8 1020.5,666.1 1023.0,668.0 1026.1,673.0 1029.3,679.3 1033.0,676.1 1036.8,674.9 1041.8,676.8 1044.3,681.1 1046.8,678.0 1050.5,679.3 1056.8,676.8 1062.4,678.0 1065.5,675.5 1068.6,674.9 1070.5,676.8 1074.3,676.8 1078.0,679.9 1081.8,678.0 1086.8,676.8 1090.5,677.4 1094.3,674.9 1100.5,675.5 1106.8,675.5 1109.9,673.6" fill="none" stroke="#000" stroke-width="2.4" stroke-linejoin="round" /><g opacity="0.3" filter="url(#blur2)" transform="translate(4,5)"><rect x="1012" y="252" width="173" height="72" fill="none" stroke="#000" stroke-width="3"/></g><rect x="1012" y="252" width="173" height="72" fill="none" stroke="#c00000" stroke-width="2"/><g opacity="0.35" filter="url(#blur)" transform="translate(3,4)"><line x1="979" y1="137" x2="1057.5" y2="295.7" stroke="#000" stroke-width="5.6" stroke-dasharray="12,6"/><polygon points="1069.0,319.0 1045.8,301.5 1069.1,289.9" fill="#000"/></g><line x1="979" y1="137" x2="1058.4" y2="297.5" stroke="#000080" stroke-width="5.6" stroke-dasharray="12,6"/><polygon points="1069.0,319.0 1045.8,301.5 1069.1,289.9" fill="#000080"/><g opacity="0.35" filter="url(#blur)" transform="translate(3,4)"><line x1="1083" y1="311" x2="1146.0" y2="278.1" stroke="#000" stroke-width="5.6" stroke-dasharray="12,6"/><polygon points="1169.0,266.0 1152.0,289.6 1139.9,266.5" fill="#000"/></g><line x1="1083" y1="311" x2="1147.7" y2="277.1" stroke="#000080" stroke-width="5.6" stroke-dasharray="12,6"/><polygon points="1169.0,266.0 1152.0,289.6 1139.9,266.5" fill="#000080"/></g><rect x="1227" y="266" width="39" height="10" fill="#000"/><text x="1229.5" y="274.8" font-size="9.8" fill="#fff" textLength="33.5" lengthAdjust="spacingAndGlyphs" >0.79134</text><polygon points="671,110 678,110 674.5,114" fill="#000"/><text x="683.5" y="116.2" font-size="9.8" fill="#000" textLength="199" lengthAdjust="spacingAndGlyphs" >EURGBP,H1&#160;&#160;0.79138 0.79149 0.79115 0.79134</text><text x="672.9" y="518.2" font-size="9.8" fill="#000" textLength="80" lengthAdjust="spacingAndGlyphs" >AO_Zotik 0.000233</text><text x="672" y="633" font-size="9.8" fill="#000" textLength="160.5" lengthAdjust="spacingAndGlyphs">WPR_VSmark(21<tspan fill="#e8a040">|</tspan>55<tspan fill="#e8a040">|</tspan>77<tspan fill="#e8a040">|</tspan>277) -62.9803</text><polygon points="1105,105 1115,105 1110,109" fill="#8899aa"/></svg><svg class="a" style="left:8px;top:83px" width="15" height="15" viewBox="0 0 15 15"><rect x="0.5" y="0.5" width="10" height="8" fill="#fff" stroke="#4a8cff" stroke-width="1" stroke-dasharray="1,1"/><path d="M2 4 l2 -2 l2 2 l2 -2" fill="none" stroke="#3070e0" stroke-width="1"/><rect x="3.5" y="5.5" width="11" height="9" fill="#fff" stroke="#4a8cff" stroke-width="1" stroke-dasharray="1,1"/><path d="M5 10 l1.5 2 l1.5 -3 l1.5 3 l1.5 -3 l1.5 2" fill="none" stroke="#3070e0" stroke-width="1"/></svg><div class="a" style="left:29px;top:84px;font-size:11.5px;line-height:13px;color:#fff;white-space:pre;transform:scaleX(0.86);transform-origin:0 0">EURGBP,M15</div><div class="a" style="left:558px;top:74px;width:95px;height:19px;border:1px solid #4c5672;border-top:none;border-radius:0 0 5px 5px;background:linear-gradient(#02050a 0%,#03060b 50%,#2e3239 60%,#3e4249 100%)"></div><div class="a" style="left:584px;top:74px;width:1px;height:18px;background:#4c5672"></div><div class="a" style="left:609px;top:74px;width:1px;height:18px;background:#4c5672"></div><div class="a" style="left:566px;top:85px;width:10px;height:3px;background:#f2f2f2"></div><div class="a" style="left:591px;top:80px;width:10px;height:8px;border:2px solid #f2f2f2;border-top-width:3px"></div><svg class="a" style="left:625px;top:79px" width="11" height="10" viewBox="0 0 11 10"><path d="M1 1 L10 9 M10 1 L1 9" stroke="#f2f2f2" stroke-width="2.6"/></svg><svg class="a" style="left:666px;top:80px" width="15" height="15" viewBox="0 0 15 15"><rect x="0.5" y="0.5" width="10" height="8" fill="#fff" stroke="#4a8cff" stroke-width="1" stroke-dasharray="1,1"/><path d="M2 4 l2 -2 l2 2 l2 -2" fill="none" stroke="#3070e0" stroke-width="1"/><rect x="3.5" y="5.5" width="11" height="9" fill="#fff" stroke="#4a8cff" stroke-width="1" stroke-dasharray="1,1"/><path d="M5 10 l1.5 2 l1.5 -3 l1.5 3 l1.5 -3 l1.5 2" fill="none" stroke="#3070e0" stroke-width="1"/></svg><div class="a" style="left:687px;top:81px;font-size:11.5px;line-height:13px;color:#a0a0a0;white-space:pre;transform:scaleX(0.83);transform-origin:0 0">EURGBP,H1</div><div class="a" style="left:1171px;top:73px;width:92px;height:16px;border:1px solid #737b88;border-top:none;border-radius:0 0 5px 5px;background:linear-gradient(#5a626e 0%,#5e6672 100%)"></div><div class="a" style="left:1196px;top:73px;width:1px;height:15px;background:#737b88"></div><div class="a" style="left:1220px;top:73px;width:1px;height:15px;background:#737b88"></div><div class="a" style="left:1178px;top:81px;width:10px;height:3px;background:#f0f0f0"></div><div class="a" style="left:1203px;top:77px;width:10px;height:8px;border:2px solid #f0f0f0;border-top-width:3px"></div><svg class="a" style="left:1238px;top:76px" width="11" height="10" viewBox="0 0 11 10"><path d="M1 1 L10 9 M10 1 L1 9" stroke="#f0f0f0" stroke-width="2.6"/></svg><div class="a" style="left:0;top:733px;width:1280px;height:1px;background:#161616"></div><div class="a" style="left:0;top:734px;width:1280px;height:16px;background:#e1e1e1"></div><div class="a" style="left:1007px;top:733px;width:84px;height:17px;background:#fff;border-left:1px solid #888;border-right:1px solid #888"></div><div class="a" style="left:0;top:734px;width:1280px;height:16px"><span class="tab" style="left:14px;color:#8e8ea0">EURUSD,M5</span><span class="tab" style="left:95px;color:#8e8ea0">EURUSD,M15</span><span class="tab" style="left:181px;color:#8e8ea0">GBPUSD,M15</span><span class="tab" style="left:267px;color:#8e8ea0">GBPUSD,H1</span><span class="tab" style="left:346px;color:#8e8ea0">AUDUSD,M15</span><span class="tab" style="left:435px;color:#8e8ea0">AUDUSD,H1</span><span class="tab" style="left:515px;color:#8e8ea0">NZDUSD,M15</span><span class="tab" style="left:603px;color:#8e8ea0">NZDUSD,H1</span><span class="tab" style="left:683px;color:#8e8ea0">USDCHF,M15</span><span class="tab" style="left:772px;color:#8e8ea0">USDCHF,H4</span><span class="tab" style="left:851px;color:#8e8ea0">USDCAD,M15</span><span class="tab" style="left:938px;color:#8e8ea0">USDCAD,H4</span><span class="tab" style="left:1017px;color:#000">EURGBP,M15</span><span class="tab" style="left:1103px;color:#8e8ea0">EURGBP,H1</span><span class="tab" style="left:1183px;color:#8e8ea0">USDJPY,M15</span></div><div class="ts" style="left:84px"></div><div class="ts" style="left:172px"></div><div class="ts" style="left:256px"></div><div class="ts" style="left:335px"></div><div class="ts" style="left:424px"></div><div class="ts" style="left:503px"></div><div class="ts" style="left:592px"></div><div class="ts" style="left:672px"></div><div class="ts" style="left:761px"></div><div class="ts" style="left:840px"></div><div class="ts" style="left:927px"></div><div class="ts" style="left:1172px"></div><svg class="a" style="left:1248px;top:737px" width="30" height="11" viewBox="0 0 30 11"><polygon points="3,5.5 7,2 7,9" fill="#a0a0a0"/><polygon points="25,5.5 21,2 21,9" fill="#000"/></svg></body></html>
